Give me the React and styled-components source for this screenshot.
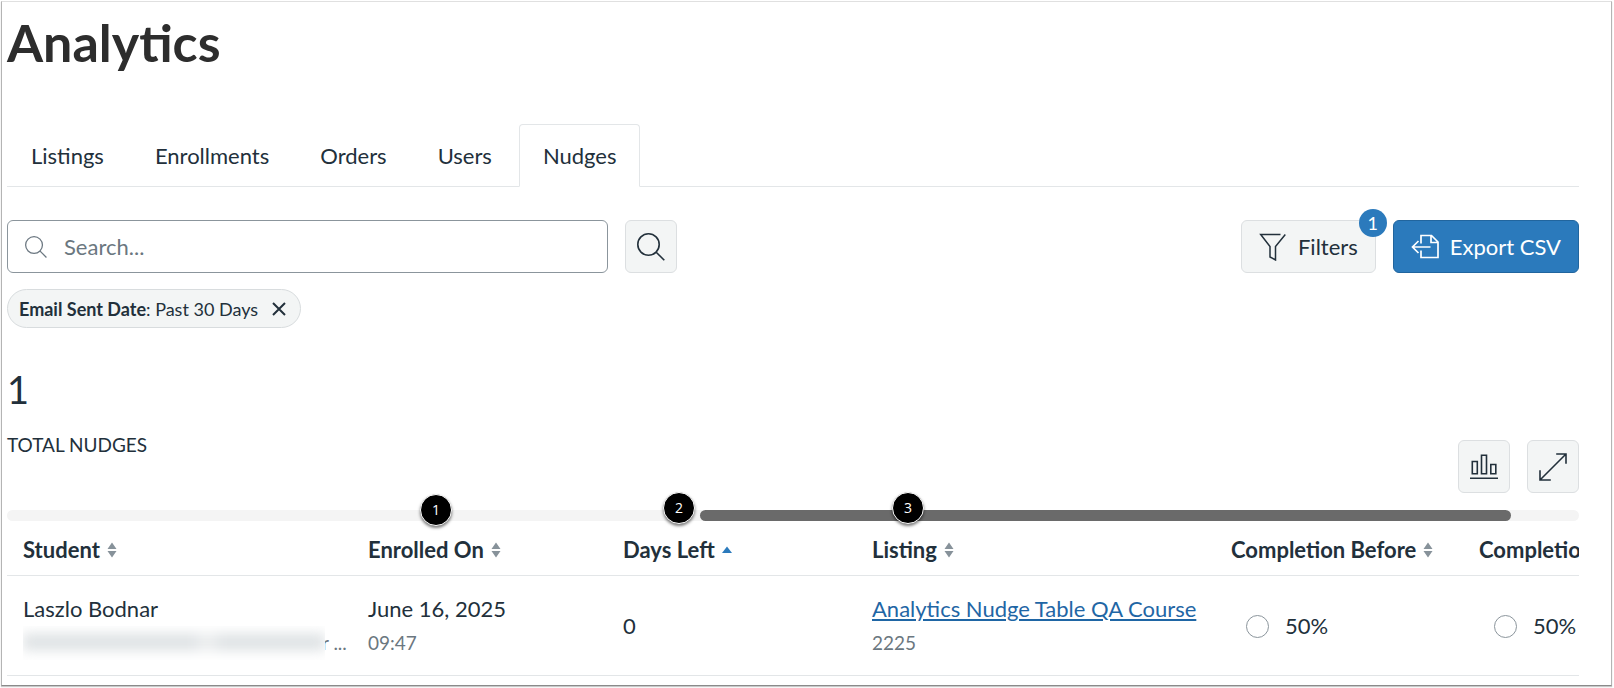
import React from "react";
import styled, { createGlobalStyle } from "styled-components";

const ink = "#22303b";
const muted = "#6b7780";
const line = "#e3e6e8";
const surface = "#f3f5f5";
const blue = "#2b7abc";

const GlobalStyle = createGlobalStyle`
  *, *::before, *::after { box-sizing: border-box; }
  body {
    margin: 0;
    background: #fff;
    color: ${ink};
    font: 400 22px/28px Lato, "Liberation Sans", sans-serif;
  }
  button, input { font: inherit; color: inherit; }
`;

const Frame = styled.main`
  margin: 1px 2px 2px 1px;
  padding: 0 32px 8px 5px;
  border: 1px solid #b4b4b4;
  border-top-color: #e0e0e0;
  border-bottom-color: #8a8a8a;
  box-shadow: 0 1px 1px #c8c8c8;
  min-height: calc(100vh - 3px);
`;

const Title = styled.h1`
  margin: 0;
  padding-top: 8px;
  color: #2d2d2d;
  font-size: 52px;
  line-height: 64px;
  font-weight: 700;
`;

const Tabs = styled.div`
  display: flex;
  gap: 3px;
  margin-top: 50px;
  border-bottom: 1px solid ${line};
`;

const Tab = styled.button`
  height: 63px;
  margin-bottom: -1px;
  padding: 0 23px;
  border: 1px solid ${(p) => (p.$active ? line : "transparent")};
  border-bottom-color: ${(p) => (p.$active ? "#fff" : "transparent")};
  border-radius: 4px 4px 0 0;
  background: ${(p) => (p.$active ? "#fff" : "transparent")};
  cursor: pointer;
`;

const Toolbar = styled.div`
  display: flex;
  align-items: center;
  gap: 17px;
  margin-top: 33px;
`;

const Spacer = styled.div`
  flex: 1;
`;

const SearchField = styled.label`
  flex: 0 1 601px;
  display: flex;
  align-items: center;
  gap: 17px;
  height: 53px;
  padding: 0 17px;
  border: 1px solid #8b959c;
  border-radius: 6px;
  color: ${muted};
`;

const SearchInput = styled.input`
  flex: 1;
  min-width: 0;
  padding: 0;
  border: 0;
  outline: 0;
  background: transparent;
  &::placeholder { color: ${muted}; opacity: 1; }
`;

const Button = styled.button`
  position: relative;
  display: flex;
  align-items: center;
  justify-content: center;
  gap: 11px;
  height: 53px;
  min-width: 52px;
  padding: ${(p) => (p.$iconOnly ? "0" : "0 17px")};
  border: 1px solid ${(p) => (p.$primary ? "#21659e" : "#dcdfe1")};
  border-radius: 6px;
  background: ${(p) => (p.$primary ? blue : surface)};
  color: ${(p) => (p.$primary ? "#fff" : ink)};
  white-space: nowrap;
  cursor: pointer;
`;

const Badge = styled.span`
  position: absolute;
  top: -12px;
  right: -12px;
  width: 28px;
  height: 28px;
  border-radius: 50%;
  background: ${blue};
  color: #fff;
  font-size: 18px;
  line-height: 28px;
  text-align: center;
`;

const Pill = styled.button`
  display: flex;
  align-items: center;
  gap: 14px;
  height: 39px;
  margin-top: 16px;
  padding: 0 14px 0 11px;
  border: 1px solid #d8dcde;
  border-radius: 20px;
  background: ${surface};
  font-size: 18px;
  line-height: 24px;
  cursor: pointer;
`;

const Summary = styled.section`
  display: flex;
  align-items: flex-end;
  gap: 17px;
  margin-top: 37px;
`;

const Metric = styled.div`
  flex: 1;
  padding-bottom: 36px;
`;

const MetricValue = styled.div`
  font-size: 38px;
  line-height: 48px;
`;

const MetricLabel = styled.div`
  margin-top: 20px;
  font-size: 19px;
  line-height: 24px;
`;

const ScrollTrack = styled.div`
  position: relative;
  height: 11px;
  margin-top: 17px;
  border-radius: 6px;
  background: #f4f4f4;
`;

const ScrollThumb = styled.div`
  width: 51.6%;
  height: 11px;
  margin-left: 44.1%;
  border-radius: 6px;
  background: #6a6a6a;
`;

const Marker = styled.span`
  position: absolute;
  top: ${(p) => p.$top}px;
  left: ${(p) => p.$left}px;
  width: 32px;
  height: 32px;
  border: 1px solid #fff;
  border-radius: 50%;
  background: #000;
  box-shadow: 0 2px 3px rgba(0, 0, 0, 0.5);
  color: #fff;
  font: 400 14px/30px "Open Sans", sans-serif;
  text-align: center;
`;

const TableViewport = styled.div`
  overflow: hidden;
`;

const Table = styled.table`
  width: 1703px;
  table-layout: fixed;
  border-collapse: collapse;
`;

const Col = styled.col`
  width: ${(p) => p.$width}px;
`;

const HeadCell = styled.th`
  height: 54px;
  padding: 5px 0 0 16px;
  border-bottom: 1px solid ${line};
  text-align: left;
  white-space: nowrap;
`;

const SortButton = styled.button`
  display: flex;
  align-items: center;
  gap: 7px;
  padding: 0;
  border: 0;
  background: transparent;
  font-weight: 700;
  cursor: pointer;
`;

const Cell = styled.td`
  height: 100px;
  padding: 2px 0 0 16px;
  border-bottom: 1px solid ${line};
  white-space: nowrap;
`;

const Primary = styled.div`
  line-height: 34px;
`;

const Secondary = styled.div`
  display: flex;
  align-items: center;
  color: ${muted};
  font-size: 19px;
  line-height: 34px;
`;

const Redacted = styled.span`
  position: relative;
  z-index: 1;
  width: 302px;
  height: 34px;
  margin-right: -3px;
  overflow: hidden;
  background: #fff;
  &::before {
    content: "";
    display: block;
    height: 18px;
    margin-top: 7px;
    background: linear-gradient(90deg, #e0e4e6 0 56%, #eceeef 60% 62%, #e0e4e6 66%);
    filter: blur(6px);
  }
`;

const Link = styled.a`
  color: #1f66a5;
  text-decoration: underline;
  text-decoration-thickness: 2px;
  text-underline-offset: 2px;
`;

const Choice = styled.label`
  display: flex;
  align-items: center;
  gap: 16px;
  padding-left: 15px;
`;

const Radio = styled.input`
  appearance: none;
  width: 23px;
  height: 23px;
  margin: 0;
  border: 1px solid #8b959c;
  border-radius: 50%;
  background: #fff;
`;

const Svg = ({ size, width, children }) => (
  <svg
    width={size}
    height={size}
    viewBox={`0 0 ${size} ${size}`}
    fill="none"
    stroke="currentColor"
    strokeWidth={width}
    aria-hidden="true"
  >
    {children}
  </svg>
);

const SearchIcon = ({ size }) => (
  <svg width={size} height={size} viewBox="0 0 28 28" fill="none" stroke="currentColor" strokeWidth="1.6" aria-hidden="true">
    <circle cx="11.5" cy="11.5" r="10.7" />
    <path d="M19.2 19.2 27.3 27.3" />
  </svg>
);

const FilterIcon = () => (
  <Svg size={28} width={1.5}>
    <path d="M21.5 1.5H1.7L11 13.5V24l5.5 3V13.5L26.3 1.5" />
  </Svg>
);

const ExportIcon = () => (
  <Svg size={28} width={1.7}>
    <path d="M10 10.5V2.5h10.5L27 9v15.5H10v-7M20 2.8V9.5h6.6M19.5 14H1.5M7.5 8 1.5 14l6 6" />
  </Svg>
);

const ChartIcon = () => (
  <Svg size={28} width={1.6}>
    <path d="M2.3 8.5h5v12.2h-5zM11.5 2.2h5v18.5h-5zM20.8 11.5h5v9.2h-5zM0 25.2h28" />
  </Svg>
);

const ExpandIcon = () => (
  <Svg size={28} width={1.6}>
    <path d="M1 27 27 1M17.2 1H27v9.8M1 17.2V27h10.8" />
  </Svg>
);

const CloseIcon = () => (
  <Svg size={14} width={2}>
    <path d="M1 1 13 13M13 1 1 13" />
  </Svg>
);

const SortIcon = ({ active }) => (
  <svg width="10" height="16" viewBox="0 0 10 16" aria-hidden="true">
    {active ? (
      <path d="M0 11 5 4.5 10 11z" fill={blue} />
    ) : (
      <path d="M.5 7 5 .5 9.5 7zM.5 9h9L5 15.5z" fill="#87929a" />
    )}
  </svg>
);

const tabs = ["Listings", "Enrollments", "Orders", "Users", "Nudges"];

const columns = [
  { label: "Student", width: 345 },
  { label: "Enrolled On", width: 255 },
  { label: "Days Left", width: 249, active: true },
  { label: "Listing", width: 359 },
  { label: "Completion Before", width: 248 },
  { label: "Completion After", width: 247 },
];

const markers = [
  { n: 1, left: 413, top: -16 },
  { n: 2, left: 656, top: -18 },
  { n: 3, left: 885, top: -18 },
];

export default function App() {
  return (
    <>
      <GlobalStyle />
      <Frame>
        <Title>Analytics</Title>
        <Tabs role="tablist">
          {tabs.map((t) => (
            <Tab key={t} role="tab" aria-selected={t === "Nudges"} $active={t === "Nudges"}>
              {t}
            </Tab>
          ))}
        </Tabs>
        <Toolbar>
          <SearchField>
            <SearchIcon size={22} />
            <SearchInput type="text" placeholder="Search..." aria-label="Search" />
          </SearchField>
          <Button $iconOnly aria-label="Search">
            <SearchIcon size={28} />
          </Button>
          <Spacer />
          <Button>
            <FilterIcon />
            Filters
            <Badge>1</Badge>
          </Button>
          <Button $primary>
            <ExportIcon />
            Export CSV
          </Button>
        </Toolbar>
        <Pill>
          <span>
            <b>Email Sent Date</b>: Past 30 Days
          </span>
          <CloseIcon />
        </Pill>
        <Summary>
          <Metric>
            <MetricValue>1</MetricValue>
            <MetricLabel>TOTAL NUDGES</MetricLabel>
          </Metric>
          <Button $iconOnly aria-label="Show chart">
            <ChartIcon />
          </Button>
          <Button $iconOnly aria-label="Expand table">
            <ExpandIcon />
          </Button>
        </Summary>
        <ScrollTrack>
          <ScrollThumb />
          {markers.map((m) => (
            <Marker key={m.n} $left={m.left} $top={m.top}>
              {m.n}
            </Marker>
          ))}
        </ScrollTrack>
        <TableViewport>
          <Table>
            <colgroup>
              {columns.map((c) => (
                <Col key={c.label} $width={c.width} />
              ))}
            </colgroup>
            <thead>
              <tr>
                {columns.map((c) => (
                  <HeadCell key={c.label} scope="col">
                    <SortButton>
                      {c.label}
                      <SortIcon active={c.active} />
                    </SortButton>
                  </HeadCell>
                ))}
              </tr>
            </thead>
            <tbody>
              <tr>
                <Cell>
                  <Primary>Laszlo Bodnar</Primary>
                  <Secondary>
                    <Redacted />
                    <span>r ...</span>
                  </Secondary>
                </Cell>
                <Cell>
                  <Primary>June 16, 2025</Primary>
                  <Secondary>09:47</Secondary>
                </Cell>
                <Cell>0</Cell>
                <Cell>
                  <Primary>
                    <Link href="#course">Analytics Nudge Table QA Course</Link>
                  </Primary>
                  <Secondary>2225</Secondary>
                </Cell>
                <Cell>
                  <Choice>
                    <Radio type="radio" name="before" />
                    50%
                  </Choice>
                </Cell>
                <Cell>
                  <Choice>
                    <Radio type="radio" name="after" />
                    50%
                  </Choice>
                </Cell>
              </tr>
            </tbody>
          </Table>
        </TableViewport>
      </Frame>
    </>
  );
}
